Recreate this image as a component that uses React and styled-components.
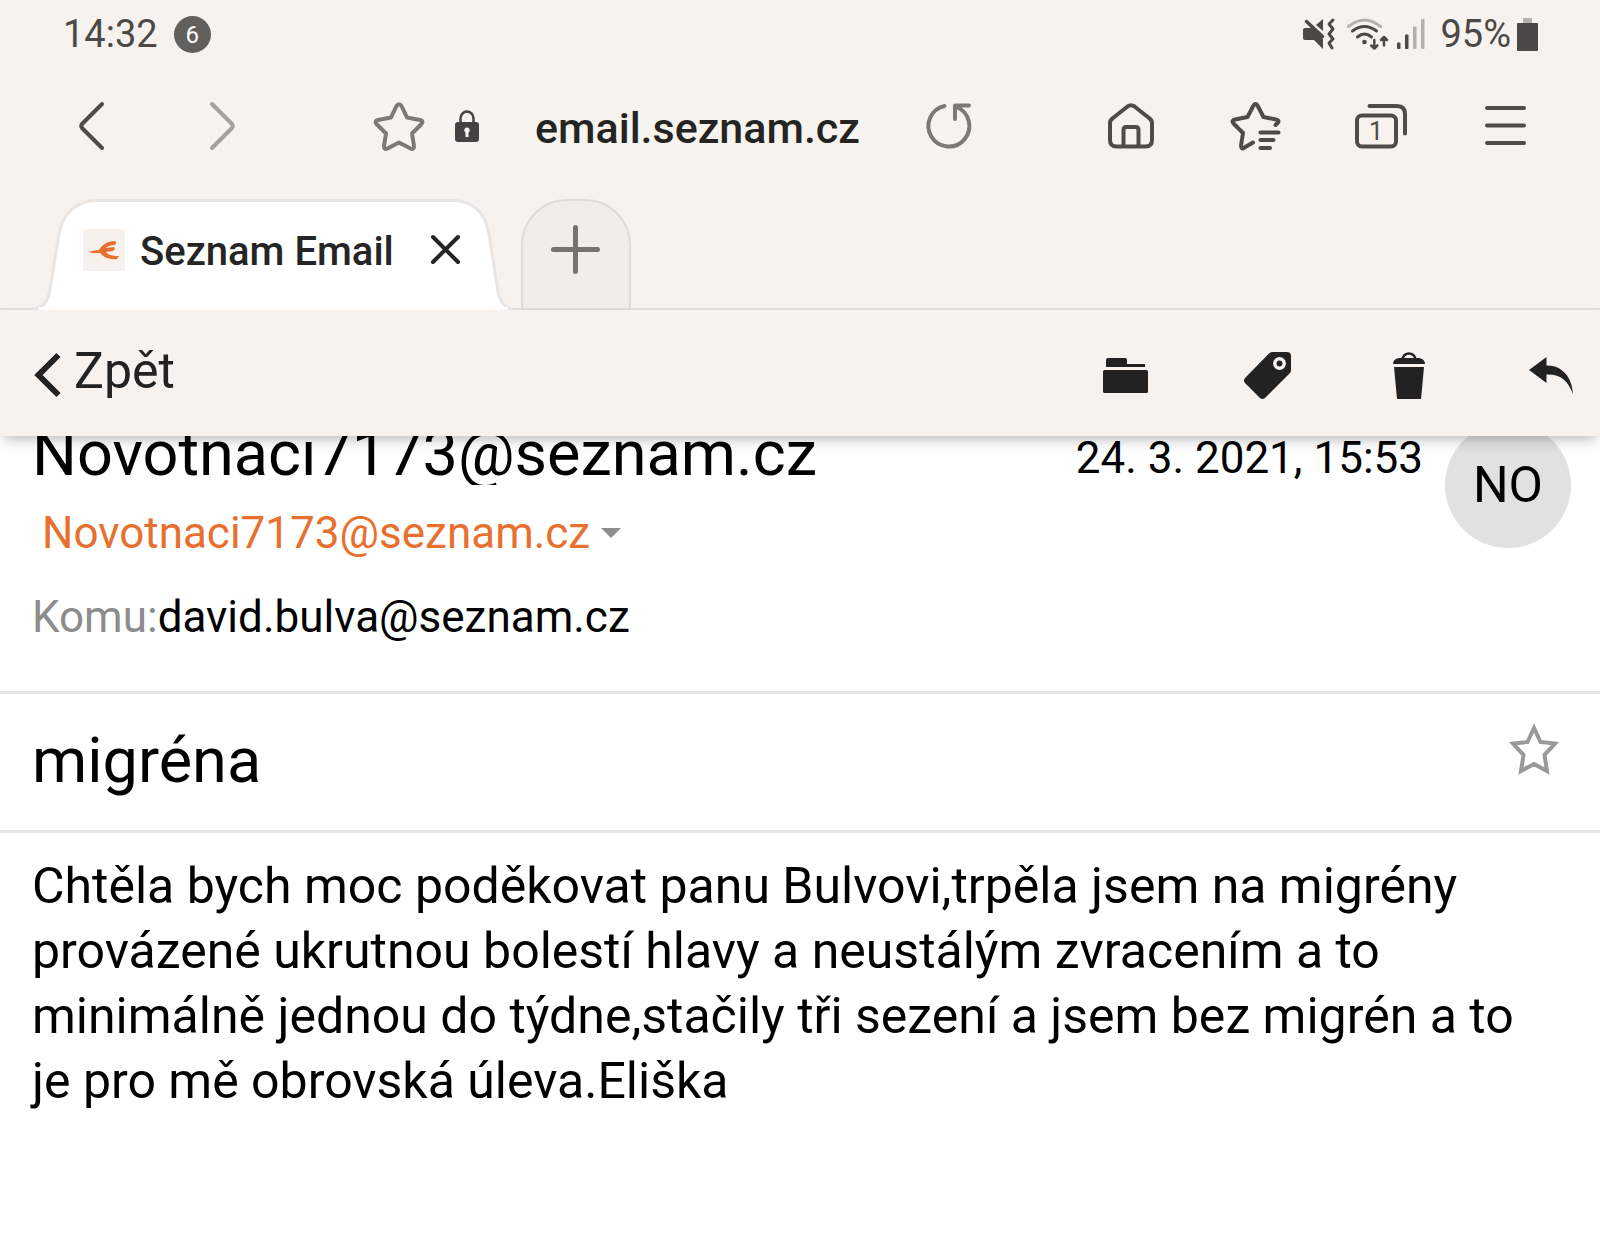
import React from 'react';
import styled, { createGlobalStyle } from 'styled-components';

const GlobalStyle = createGlobalStyle`
  * {
    box-sizing: border-box;
  }
  body {
    margin: 0;
    background: #fff;
    font-family: Roboto, "Noto Sans", sans-serif;
    color: #000;
  }
  button, input {
    font: inherit;
    color: inherit;
    background: none;
    border: 0;
    padding: 0;
    margin: 0;
  }
  button {
    cursor: pointer;
  }
  h1, h2, p {
    margin: 0;
    font-weight: 400;
  }
`;

const Svg = styled.svg`
  display: block;
  flex: none;
  overflow: visible;
  fill: ${({ $solid }) => ($solid ? 'currentColor' : 'none')};
  stroke: ${({ $solid }) => ($solid ? 'none' : 'currentColor')};
  stroke-width: ${({ $stroke }) => $stroke || 4};
  stroke-linecap: round;
  stroke-linejoin: round;
`;

const Icon = ({ w, h, solid, stroke, children }) => (
  <Svg width={w} height={h} viewBox={`0 0 ${w} ${h}`} $solid={solid} $stroke={stroke} aria-hidden="true">
    {children}
  </Svg>
);

/* Browser chrome */

const Chrome = styled.header`
  background: #f7f2ee;
`;
const StatusBar = styled.div`
  display: flex;
  align-items: center;
  justify-content: space-between;
  height: 64px;
  padding: 4px 62px 0 63px;
  font-size: 38px;
  line-height: 48px;
  color: #4b4845;
`;
const StatusGroup = styled.div`
  display: flex;
  align-items: center;
  gap: ${({ $gap }) => $gap}px;
`;
const Count = styled.span`
  width: 37px;
  height: 37px;
  border-radius: 50%;
  background: #62605d;
  color: #fff;
  font-size: 24px;
  line-height: 38px;
  text-align: center;
`;

const NavBar = styled.nav`
  display: flex;
  align-items: center;
  height: 124px;
  padding: 0 32px 0 26px;
  color: #4f4b48;
`;
const NavButton = styled.button`
  display: flex;
  align-items: center;
  justify-content: center;
  width: ${({ $width }) => $width}px;
  height: 80px;
  color: ${({ $color }) => $color || 'inherit'};
`;
const AddressBar = styled.div`
  flex: 1;
  min-width: 0;
  display: flex;
  align-items: center;
  height: 100px;
  margin: 0 33px 0 27px;
  padding: 0 46px 0 44px;
  border-radius: 50px;
  background: #f7f4ef;
`;
const Lock = styled.span`
  margin: 0 56px 0 16px;
  color: #454341;
`;
const Address = styled.input`
  flex: 1;
  min-width: 0;
  height: 60px;
  padding-top: 3px;
  font-size: 43px;
  font-weight: 500;
  color: #252422;
  outline: none;
`;

const TabStrip = styled.div`
  display: flex;
  align-items: flex-end;
  gap: 8px;
  height: 122px;
  padding-left: 33px;
  border-bottom: 2px solid #e2dedb;
`;
const Tab = styled.div`
  position: relative;
  display: flex;
  align-items: center;
  width: 480px;
  height: 111px;
  margin-bottom: -2px;
  padding: 0 53px 10px 50px;
  color: #252525;
`;
const TabShape = styled.svg`
  position: absolute;
  inset: 0;
  width: 100%;
  height: 100%;
`;
const Favicon = styled.span`
  position: relative;
  width: 42px;
  height: 42px;
  background: #f6f1ed;
`;
const TabTitle = styled.span`
  position: relative;
  flex: 1;
  padding: 4px 0 0 15px;
  font-size: 40px;
  line-height: 56px;
  font-weight: 500;
  white-space: nowrap;
`;
const CloseTab = styled.button`
  position: relative;
`;
const NewTab = styled.button`
  display: flex;
  align-items: center;
  justify-content: center;
  width: 110px;
  height: 111px;
  margin-bottom: -2px;
  padding: 0 2px 10px 0;
  border: 2px solid #e0dbd8;
  border-radius: 46px 46px 0 0;
  background: #f1ede9;
  color: #777370;
`;

/* Mail */

const MailBar = styled.div`
  position: relative;
  z-index: 1;
  display: flex;
  align-items: center;
  justify-content: space-between;
  height: 126px;
  padding: 4px 25px 0 35px;
  background: #f7f2ee;
  box-shadow: 0 8px 12px -4px rgba(0, 0, 0, 0.25);
  color: #222;
`;
const BackLink = styled.a`
  display: flex;
  align-items: center;
  gap: 14px;
  color: inherit;
  text-decoration: none;
  font-size: 50px;
  line-height: 60px;
`;
const BackLabel = styled.span`
  padding-bottom: 8px;
`;
const Actions = styled.div`
  display: flex;
  gap: 94px;
`;
const Action = styled.button`
  display: flex;
  align-items: center;
  justify-content: center;
  width: 48px;
  height: 56px;
`;

const MessageHead = styled.section`
  display: flex;
  gap: 22px;
  margin-top: -17px;
  padding: 0 29px 42px 32px;
  border-bottom: 3px solid #e6e6e6;
`;
const HeadMain = styled.div`
  flex: 1;
  min-width: 0;
`;
const NameRow = styled.div`
  display: flex;
  align-items: flex-start;
  justify-content: space-between;
  height: 66px;
`;
/* the box is tighter than the glyphs, the tail of the @ is cut */
const SenderName = styled.h1`
  font-size: 63px;
  line-height: 70px;
  height: 66px;
  overflow: clip;
`;
const SentAt = styled.time`
  font-size: 44px;
  line-height: 78px;
`;
const Sender = styled.button`
  display: flex;
  align-items: center;
  gap: 11px;
  margin-top: 16px;
  padding-left: 10px;
  font-size: 44px;
  line-height: 64px;
  color: #e8702f;
`;
const Caret = styled.span`
  border: 10px solid transparent;
  border-top-color: #8e8e8e;
  border-bottom: 0;
`;
const Recipient = styled.p`
  margin-top: 20px;
  font-size: 44px;
  line-height: 64px;
  span {
    color: #8c8c8c;
  }
`;
const Avatar = styled.div`
  flex: none;
  width: 126px;
  height: 126px;
  margin-top: 3px;
  border-radius: 50%;
  background: #e1e1e1;
  font-size: 50px;
  line-height: 126px;
  text-align: center;
`;

const SubjectRow = styled.section`
  display: flex;
  align-items: center;
  justify-content: space-between;
  height: 139px;
  padding: 0 41px 2px 32px;
  border-bottom: 3px solid #e6e6e6;
`;
const Subject = styled.h2`
  font-size: 63px;
  line-height: 72px;
`;
const StarButton = styled.button`
  padding-bottom: 24px;
  color: #999;
`;
const Body = styled.p`
  padding: 21px 48px 21px 32px;
  font-size: 50px;
  line-height: 65px;
`;

const App = () => (
  <>
    <GlobalStyle />
    <Chrome>
      <StatusBar>
        <StatusGroup $gap={16}>
          <time>14:32</time>
          <Count>6</Count>
        </StatusGroup>
        <StatusGroup $gap={12}>
          <Icon w={32} h={33} solid>
            <path d="M0 12q0-2 2-2h8l10 11v10l-9-9H2q-2 0-2-2z" />
            <path d="M13 7l7-6v12z" />
            <path d="M3.500 3.500l16 15" stroke="currentColor" strokeWidth="3.500" />
            <path d="M30 2l-4 4 4 5-4 5 4 5-4 4 3 5" fill="none" stroke="currentColor" strokeWidth="3" />
          </Icon>
          <Icon w={38} h={33} stroke={3}>
            <path d="M1.500 8.500Q17.500-4.500 33.500 8.500" stroke="#b5b0ac" />
            <path d="M5.500 13Q17.500 4 29.500 13M10.500 19Q17.500 13 24.500 19" />
            <circle cx="17.500" cy="24" r="2.300" fill="currentColor" stroke="none" />
            <path d="M27.300 22v8M24.300 27.500l3 3 3-3M37 27.500v-8M34 22l3-3 3 3" strokeWidth="2.500" />
          </Icon>
          <Icon w={31} h={30} solid>
            <rect y="23.500" width="3.500" height="6.500" rx="1" />
            <rect x="8" y="15.500" width="3.500" height="14.500" rx="1" />
            <rect x="16" y="7.500" width="3.500" height="22.500" rx="1" fill="#b5b0ac" />
            <rect x="24" width="3.500" height="30" rx="1" fill="#b5b0ac" />
          </Icon>
          <StatusGroup $gap={6}>
            <span>95%</span>
            <Icon w={21} h={33} solid>
              <rect x="6" width="9" height="6" rx="1" fill="#b5b0ac" />
              <rect y="5" width="21" height="28" rx="1" />
            </Icon>
          </StatusGroup>
        </StatusGroup>
      </StatusBar>

      <NavBar>
        <NavButton $width={131} aria-label="Zpět na předchozí stránku">
          <Icon w={25} h={48}>
            <path d="M23 2L3 22Q1.500 24 3 26L23 46" />
          </Icon>
        </NavButton>
        <NavButton $width={131} $color="#a5a19d" aria-label="Vpřed">
          <Icon w={25} h={48}>
            <path d="M2 2L22 22Q23.500 24 22 26L2 46" />
          </Icon>
        </NavButton>
        <AddressBar>
          <NavButton $width={80} $color="#7c7976" aria-label="Přidat do oblíbených">
            <Icon w={50} h={49}>
              <path d="M22.500 4Q25 .5 27.500 4L33 15.500L46 18Q50 19 47.500 22L38 31.500L40 44Q40 48 36.500 46.500L25 40.500L13.500 46.500Q10 48 10 44L12 31.500L2.500 22Q0 19 4 18L17 15.500Z" />
            </Icon>
          </NavButton>
          <Lock>
            <Icon w={24} h={32} solid>
              <rect y="12" width="24" height="20" rx="3" />
              <path d="M5.500 13V8.500a6.500 7 0 0 1 13 0V13" fill="none" stroke="currentColor" strokeWidth="2.500" />
              <path d="M12 17.500a2.700 2.700 0 0 1 1.500 5v4.500h-3v-4.500a2.700 2.700 0 0 1 1.500-5z" fill="#f7f4ef" />
            </Icon>
          </Lock>
          <Address type="text" aria-label="Adresa" defaultValue="email.seznam.cz" />
          <NavButton $width={80} $color="#7c7976" aria-label="Obnovit">
            <Icon w={46} h={46}>
              <path d="M18.500 3A20.500 20.500 0 1 0 30.500 4M29 16V2.500H43" />
            </Icon>
          </NavButton>
        </AddressBar>
        <NavButton $width={125} aria-label="Domů">
          <Icon w={46} h={46}>
            <path d="M2 20Q2 17 5 15L19.500 3.500Q23 1 26.500 3.500L41 15Q44 17 44 20V37Q44 43.500 37.500 43.500H8.500Q2 43.500 2 37Z" />
            <path d="M15.500 43V27Q15.500 24 18.500 24H27.500Q30.500 24 30.500 27V43" />
          </Icon>
        </NavButton>
        <NavButton $width={125} aria-label="Záložky">
          <Icon w={50} h={48}>
            <path d="M44.500 23L47 20.500Q48.500 18 45 17.500L32.500 15L26.500 3.500Q24.500 .5 22.500 3.500L16.500 15L4 17.500Q0 18.500 2.500 21.500L12 31L10 43.500Q10 48 13.500 45.500L22 40.500" />
            <path d="M29.500 30.500H47.500M29.500 38H42.500M29.500 46H39" />
          </Icon>
        </NavButton>
        <NavButton $width={125} aria-label="Karty">
          <Icon w={52} h={44}>
            <rect x="2" y="11.500" width="39" height="31" rx="5" />
            <path d="M14.500 2H42Q50 2 50 10V29.500" />
            <text x="21" y="36" fontSize="25" textAnchor="middle" fill="currentColor" strokeWidth="0">1</text>
          </Icon>
        </NavButton>
        <NavButton $width={125} aria-label="Nabídka">
          <Icon w={41} h={41}>
            <path d="M2 2H39M2 19.500H39M2 37H39" />
          </Icon>
        </NavButton>
      </NavBar>

      <TabStrip>
        <Tab>
          <TabShape viewBox="0 0 480 111" preserveAspectRatio="none" aria-hidden="true">
            <path
              d="M0 110C9 110 15 102 16.500 93L26 35C29 15 44 1.500 64 1.500H420C440 1.500 453 15 456 35L465 93C466.500 102 473 110 480 110"
              fill="#fff"
              stroke="#e8e5e2"
              strokeWidth="3"
            />
            <path d="M5 108H475V111H5Z" fill="#fff" />
          </TabShape>
          <Favicon>
            <Icon w={42} h={42} solid>
              <path
                fill="#e86f2d"
                d="M5 23l4-1 7-1C19 16 24 12 32 12q2 1 0 4c-5 0-7 1-9 3l8-1q2 2-1 4l-7 1c2 3 6 4 13 4l-2 3c-8 1-14-2-17-6l-7 0z"
              />
            </Icon>
          </Favicon>
          <TabTitle>Seznam Email</TabTitle>
          <CloseTab aria-label="Zavřít kartu">
            <Icon w={29} h={29}>
              <path d="M2 2L27 27M27 2L2 27" />
            </Icon>
          </CloseTab>
        </Tab>
        <NewTab aria-label="Nová karta">
          <Icon w={49} h={49} stroke={5}>
            <path d="M24.500 2.500V46.500M2.500 24.500H46.500" />
          </Icon>
        </NewTab>
      </TabStrip>
    </Chrome>

    <MailBar>
      <BackLink href="#">
        <Icon w={25} h={44} stroke={6}>
          <path d="M23.500 2L3.500 22L23.500 42" strokeLinecap="butt" strokeLinejoin="miter" />
        </Icon>
        <BackLabel>Zpět</BackLabel>
      </BackLink>
      <Actions>
        <Action aria-label="Přesunout">
          <Icon w={45} h={35} solid>
            <path d="M3 9V2q0-2 2-2h17q2 0 2 2v4h18v3z" />
            <rect y="12" width="45" height="23" rx="1.500" />
          </Icon>
        </Action>
        <Action aria-label="Štítek">
          <Icon w={47} h={47} solid>
            <path d="M28 0H43Q47 0 47 4V18Q47 20 45.500 21.500L21 46Q18.500 48 16 46L1 31Q-1 28.500 1 26L25 1.500Q26.500 0 28 0Z" />
            <circle cx="35.500" cy="11.500" r="4.700" fill="none" stroke="#f7f2ee" strokeWidth="3.500" />
          </Icon>
        </Action>
        <Action aria-label="Smazat">
          <Icon w={32} h={47} solid>
            <path d="M9.500 7Q11 1.500 16 1.500T22.500 7" fill="none" stroke="currentColor" strokeWidth="2.500" />
            <path d="M0 12Q0 7 6 6H26Q32 7 32 12Z" />
            <path d="M11.500 6Q16 2.500 20.500 6Z" fill="#f7f2ee" />
            <path d="M1 15H31L28 47H4Z" />
          </Icon>
        </Action>
        <Action aria-label="Odpovědět">
          <Icon w={44} h={37} solid>
            <path d="M0 13L17.500 0V8.500C32 8 43 19 44 37C39 24 32 17 17.500 17.500V26Z" />
          </Icon>
        </Action>
      </Actions>
    </MailBar>

    <main>
      <MessageHead>
        <HeadMain>
          <NameRow>
            <SenderName>Novotnaci7173@seznam.cz</SenderName>
            <SentAt dateTime="2021-03-24T15:53">24. 3. 2021, 15:53</SentAt>
          </NameRow>
          <Sender>
            Novotnaci7173@seznam.cz
            <Caret />
          </Sender>
          <Recipient>
            <span>Komu:</span>david.bulva@seznam.cz
          </Recipient>
        </HeadMain>
        <Avatar>NO</Avatar>
      </MessageHead>
      <SubjectRow>
        <Subject>migréna</Subject>
        <StarButton aria-label="Označit hvězdičkou">
          <Icon w={50} h={52} stroke={4}>
            <path
              d="M25 5L31.500 19L46 20.500L35.500 32L38 48L25 41L12 48L14.500 32L4 20.500L18.500 19Z"
              strokeLinejoin="miter"
            />
          </Icon>
        </StarButton>
      </SubjectRow>
      <Body>
        Chtěla bych moc poděkovat panu Bulvovi,trpěla jsem na migrény provázené ukrutnou bolestí hlavy a neustálým
        zvracením a to minimálně jednou do týdne,stačily tři sezení a jsem bez migrén a to je pro mě obrovská
        úleva.Eliška
      </Body>
    </main>
  </>
);

export default App;
